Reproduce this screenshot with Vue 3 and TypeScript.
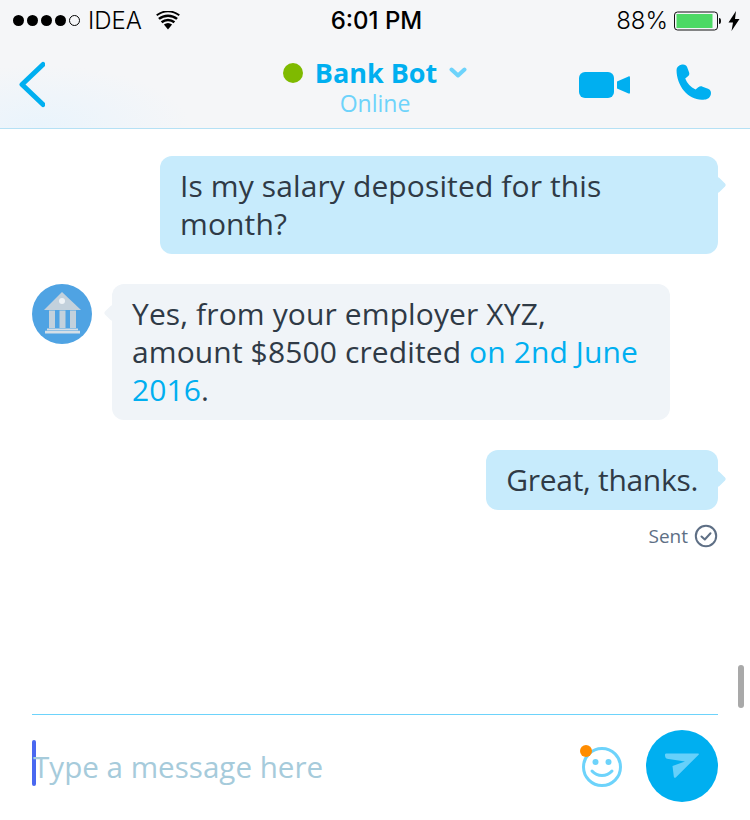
<script setup lang="ts">
const signal: boolean[] = [true, true, true, true, false]
</script>

<template>
  <div class="screen">
    <header class="top">
      <div class="status">
        <div class="status-side">
          <span class="dots">
            <i v-for="(on, n) in signal" :key="n" :class="{ off: !on }"></i>
          </span>
          <span class="carrier">IDEA</span>
          <svg class="wifi" width="24" height="19" viewBox="0 0 24 19">
            <path d="M12 18.5 7.9 13.6a6.4 6.4 0 0 1 8.2 0Z" fill="#000" />
            <path d="M5.6 10.9a10 10 0 0 1 12.8 0M2.9 7.5a14.4 14.4 0 0 1 18.2 0" transform="translate(0 .4)" fill="none" stroke="#000" stroke-width="2.5" />
            <path d="M.7 4.3a18 18 0 0 1 22.6 0" fill="none" stroke="#000" stroke-width="1.8" />
          </svg>
        </div>
        <span class="clock">6:01 PM</span>
        <div class="status-side right">
          <span class="percent">88%</span>
          <svg class="battery" width="48" height="20" viewBox="0 0 48 20">
            <rect x=".5" y="1" width="43" height="18" rx="3" fill="none" stroke="#111" />
            <rect x="2.5" y="3" width="36" height="14" fill="#4cd964" />
            <path d="M45 7c1.500 0 2 1 2 3s-.5 3-2 3Z" fill="#111" />
          </svg>
          <svg class="bolt" width="12" height="20" viewBox="0 0 12 20">
            <path d="M8 0 .5 11.500H5L3.500 20 11.500 8H7Z" fill="#000" />
          </svg>
        </div>
      </div>

      <nav class="nav">
        <svg class="back" width="28" height="48" viewBox="0 0 28 48">
          <path d="M26 3.500 5 23.500l21 20" fill="none" stroke="#00aff0" stroke-width="5" stroke-linecap="round" stroke-linejoin="round" />
        </svg>
        <div class="contact">
          <div class="name-row">
            <i class="presence"></i>
            <span class="name">Bank Bot</span>
            <svg width="18" height="11" viewBox="0 0 18 11">
              <path d="M2.500 2.500 9 8.500l6.500-6" fill="none" stroke="#6dd3fb" stroke-width="4" stroke-linecap="round" stroke-linejoin="round" />
            </svg>
          </div>
          <div class="presence-label">Online</div>
        </div>
        <div class="actions">
          <svg width="52" height="28" viewBox="0 0 52 28">
            <rect x="0" y="1" width="35" height="26" rx="6" fill="#00aff0" />
            <path d="M38 10.500 49.500 5.500c1-.4 1.500 0 1.500 1v15c0 1-.5 1.400-1.500 1L38 17.500Z" fill="#00aff0" />
          </svg>
          <svg class="phone" width="38" height="38" viewBox="3 1 34 35">
            <path d="M3 6.500c0-2.500 2-4.500 5-5 2.500-.3 4 .5 4.800 2.500l1.700 4.500c.6 1.600.2 2.800-1 3.800l-2.500 2c1.800 4.600 5 8 9.500 10.200l2.500-2c1.300-1 2.500-1.100 4-.6l5 1.900c2 .8 3 2.300 2.700 4.600-.4 3.200-2.800 5.300-5.700 5.300C15 35.700 3 22 3 6.500Z" fill="#00aff0" />
          </svg>
        </div>
      </nav>
    </header>

    <main class="chat">
      <div class="bubble mine wide">Is my salary deposited for this month?</div>

      <div class="incoming">
        <svg class="avatar" width="60" height="60" viewBox="0 0 60 60">
          <circle cx="30" cy="30" r="30" fill="#4fa3e3" />
          <path d="M30 8 49 26H12Z" fill="#c3d1dc" />
          <circle cx="30" cy="17" r="3" fill="#eef3f7" />
          <path d="M17 26.500h6v17.500h-6ZM27.500 26.500h6v17.500h-6ZM38 26.500h6v17.500h-6Z" fill="#c3d1dc" />
          <path d="M15 44.500h31v1.800H15ZM13 46.800h35v2.700H13Z" fill="#d5dfe7" />
        </svg>
        <div class="bubble theirs wide">
          Yes, from your employer XYZ, amount $8500 credited
          <span class="date-link">on 2nd June 2016</span>.
        </div>
      </div>

      <div class="bubble mine short">Great, thanks.</div>
      <div class="receipt">
        <span>Sent</span>
        <svg width="24" height="24" viewBox="0 0 24 24">
          <circle cx="12" cy="12" r="10.200" fill="none" stroke="#5e6f85" stroke-width="2" />
          <path d="M7.500 12.500 10.800 15.500 16.500 9.300" fill="none" stroke="#5e6f85" stroke-width="2" stroke-linecap="round" stroke-linejoin="round" />
        </svg>
      </div>
    </main>

    <footer class="composer">
      <i class="caret"></i>
      <span class="placeholder">Type a message here</span>
      <span class="emoji">
        <svg width="44" height="44" viewBox="0 0 44 44">
          <circle cx="22" cy="23" r="18.500" fill="none" stroke="#6dd3fb" stroke-width="3" />
          <circle cx="15.500" cy="18" r="3" fill="#6dd3fb" />
          <circle cx="28.500" cy="18" r="3" fill="#6dd3fb" />
          <path d="M12 27c5.500 6 14.500 6 20 0" fill="none" stroke="#6dd3fb" stroke-width="3" stroke-linecap="round" />
        </svg>
        <i class="notice"></i>
      </span>
      <button class="send" type="button" aria-label="Send">
        <svg width="36" height="28" viewBox="0 0 36 28">
          <path d="M2 1.500h32c1 0 1.300.5.600 1.200L12 25.200c-1 1-2 .6-2.200-.8L8.500 14 21 9.500 3 6.800C.8 6.300.3 1.500 2 1.500Z" fill="#66d0fa" />
        </svg>
      </button>
    </footer>

    <i class="scroll-thumb"></i>
  </div>
</template>

<style>
html,
body {
  margin: 0;
  background: #fff;
}
</style>

<style scoped>
.screen {
  position: relative;
  width: 750px;
  height: 820px;
  overflow: hidden;
  display: flex;
  flex-direction: column;
  background: #fff;
  font-family: "Open Sans", "Noto Sans", sans-serif;
  color: #2f3a46;
}

.top {
  height: 128px;
  box-sizing: content-box;
  border-bottom: 1px solid #b5e1f5;
  background:
    radial-gradient(ellipse 150px 60px at 40px 125px, #eaf4fc 0%, rgba(234, 244, 252, 0) 100%),
    #f5f6f8;
}

.status {
  height: 41px;
  padding: 0 10px 0 13px;
  display: grid;
  grid-template-columns: 1fr auto 1fr;
  align-items: center;
  font-family: Inter, "Liberation Sans", sans-serif;
  color: #000;
}

.status-side {
  display: flex;
  align-items: center;
}

.status-side.right {
  justify-content: flex-end;
}

.dots {
  display: flex;
  gap: 3px;
}

.dots i {
  width: 11px;
  height: 11px;
  border-radius: 50%;
  background: #000;
  box-sizing: border-box;
}

.dots i.off {
  background: none;
  border: 1px solid #000;
}

.carrier {
  margin-left: 8px;
  font-size: 24px;
  font-weight: 300;
}

.wifi {
  margin-left: 14px;
}

.clock {
  font-size: 24px;
  font-weight: 500;
}

.percent {
  font-size: 24px;
  font-weight: 300;
}

.battery {
  margin-left: 6px;
}

.bolt {
  margin-left: 6px;
}

.nav {
  height: 87px;
  padding: 0 17px;
  display: grid;
  grid-template-columns: 1fr auto 1fr;
  align-items: center;
}

.contact {
  text-align: center;
  transform: translateY(1px);
}

.name-row {
  display: flex;
  align-items: center;
  gap: 12px;
  height: 36px;
}

.presence {
  width: 20px;
  height: 20px;
  border-radius: 50%;
  background: #7fba00;
}

.name {
  font-size: 27px;
  font-weight: 700;
  color: #00aff0;
}

.presence-label {
  margin-top: -2px;
  font-size: 23px;
  line-height: 28px;
  color: #6dd3fb;
}

.actions {
  padding-right: 19px;
  display: flex;
  justify-content: flex-end;
  align-items: center;
  gap: 45px;
}

.phone {
  margin-top: -3px;
}

.chat {
  flex: 1;
  padding: 27px 32px 0;
  display: flex;
  flex-direction: column;
  align-items: flex-end;
}

.bubble {
  position: relative;
  box-sizing: border-box;
  padding: 11px 20px;
  border-radius: 12px;
  font-size: 30px;
  line-height: 38px;
}

.bubble.wide {
  width: 558px;
  letter-spacing: 0.12px;
}

.bubble.short {
  letter-spacing: -0.3px;
}

.bubble::after {
  content: "";
  position: absolute;
  top: 23px;
  width: 12px;
  height: 12px;
  transform: rotate(45deg);
  border-radius: 2px;
  background: inherit;
}

.mine {
  background: #c7ebfc;
}

.mine::after {
  right: -6px;
}

.theirs {
  background: #f0f4f8;
}

.theirs::after {
  left: -6px;
}

.incoming {
  align-self: stretch;
  margin: 30px 0;
  padding-right: 48px;
  display: flex;
  align-items: flex-start;
  gap: 20px;
}

.avatar {
  flex: none;
}

.date-link {
  color: #00aff0;
}

.receipt {
  margin-top: 14px;
  display: flex;
  align-items: center;
  gap: 6px;
  font-size: 19px;
  line-height: 24px;
  color: #5e6f85;
}

.composer {
  height: 102px;
  margin: 0 32px;
  padding-bottom: 3px;
  border-top: 1px solid #6dd3fb;
  display: flex;
  align-items: center;
}

.caret {
  flex: none;
  width: 4px;
  height: 46px;
  margin-bottom: 6px;
  border-radius: 2px;
  background: #4a68f0;
}

.placeholder {
  flex: 1;
  margin-left: -3px;
  font-size: 29.6px;
  color: #a6cbdb;
}

.emoji {
  position: relative;
  display: flex;
  margin-right: 22px;
}

.notice {
  position: absolute;
  left: 0;
  top: 1px;
  width: 12px;
  height: 12px;
  border-radius: 50%;
  background: #ff8c00;
}

.send {
  flex: none;
  width: 72px;
  height: 72px;
  padding: 0;
  border: 0;
  border-radius: 50%;
  display: flex;
  align-items: center;
  justify-content: center;
  background: #00aff0;
}

.scroll-thumb {
  position: absolute;
  left: 738px;
  top: 665px;
  width: 6px;
  height: 43px;
  border-radius: 3px;
  background: #a9a9a9;
}
</style>
